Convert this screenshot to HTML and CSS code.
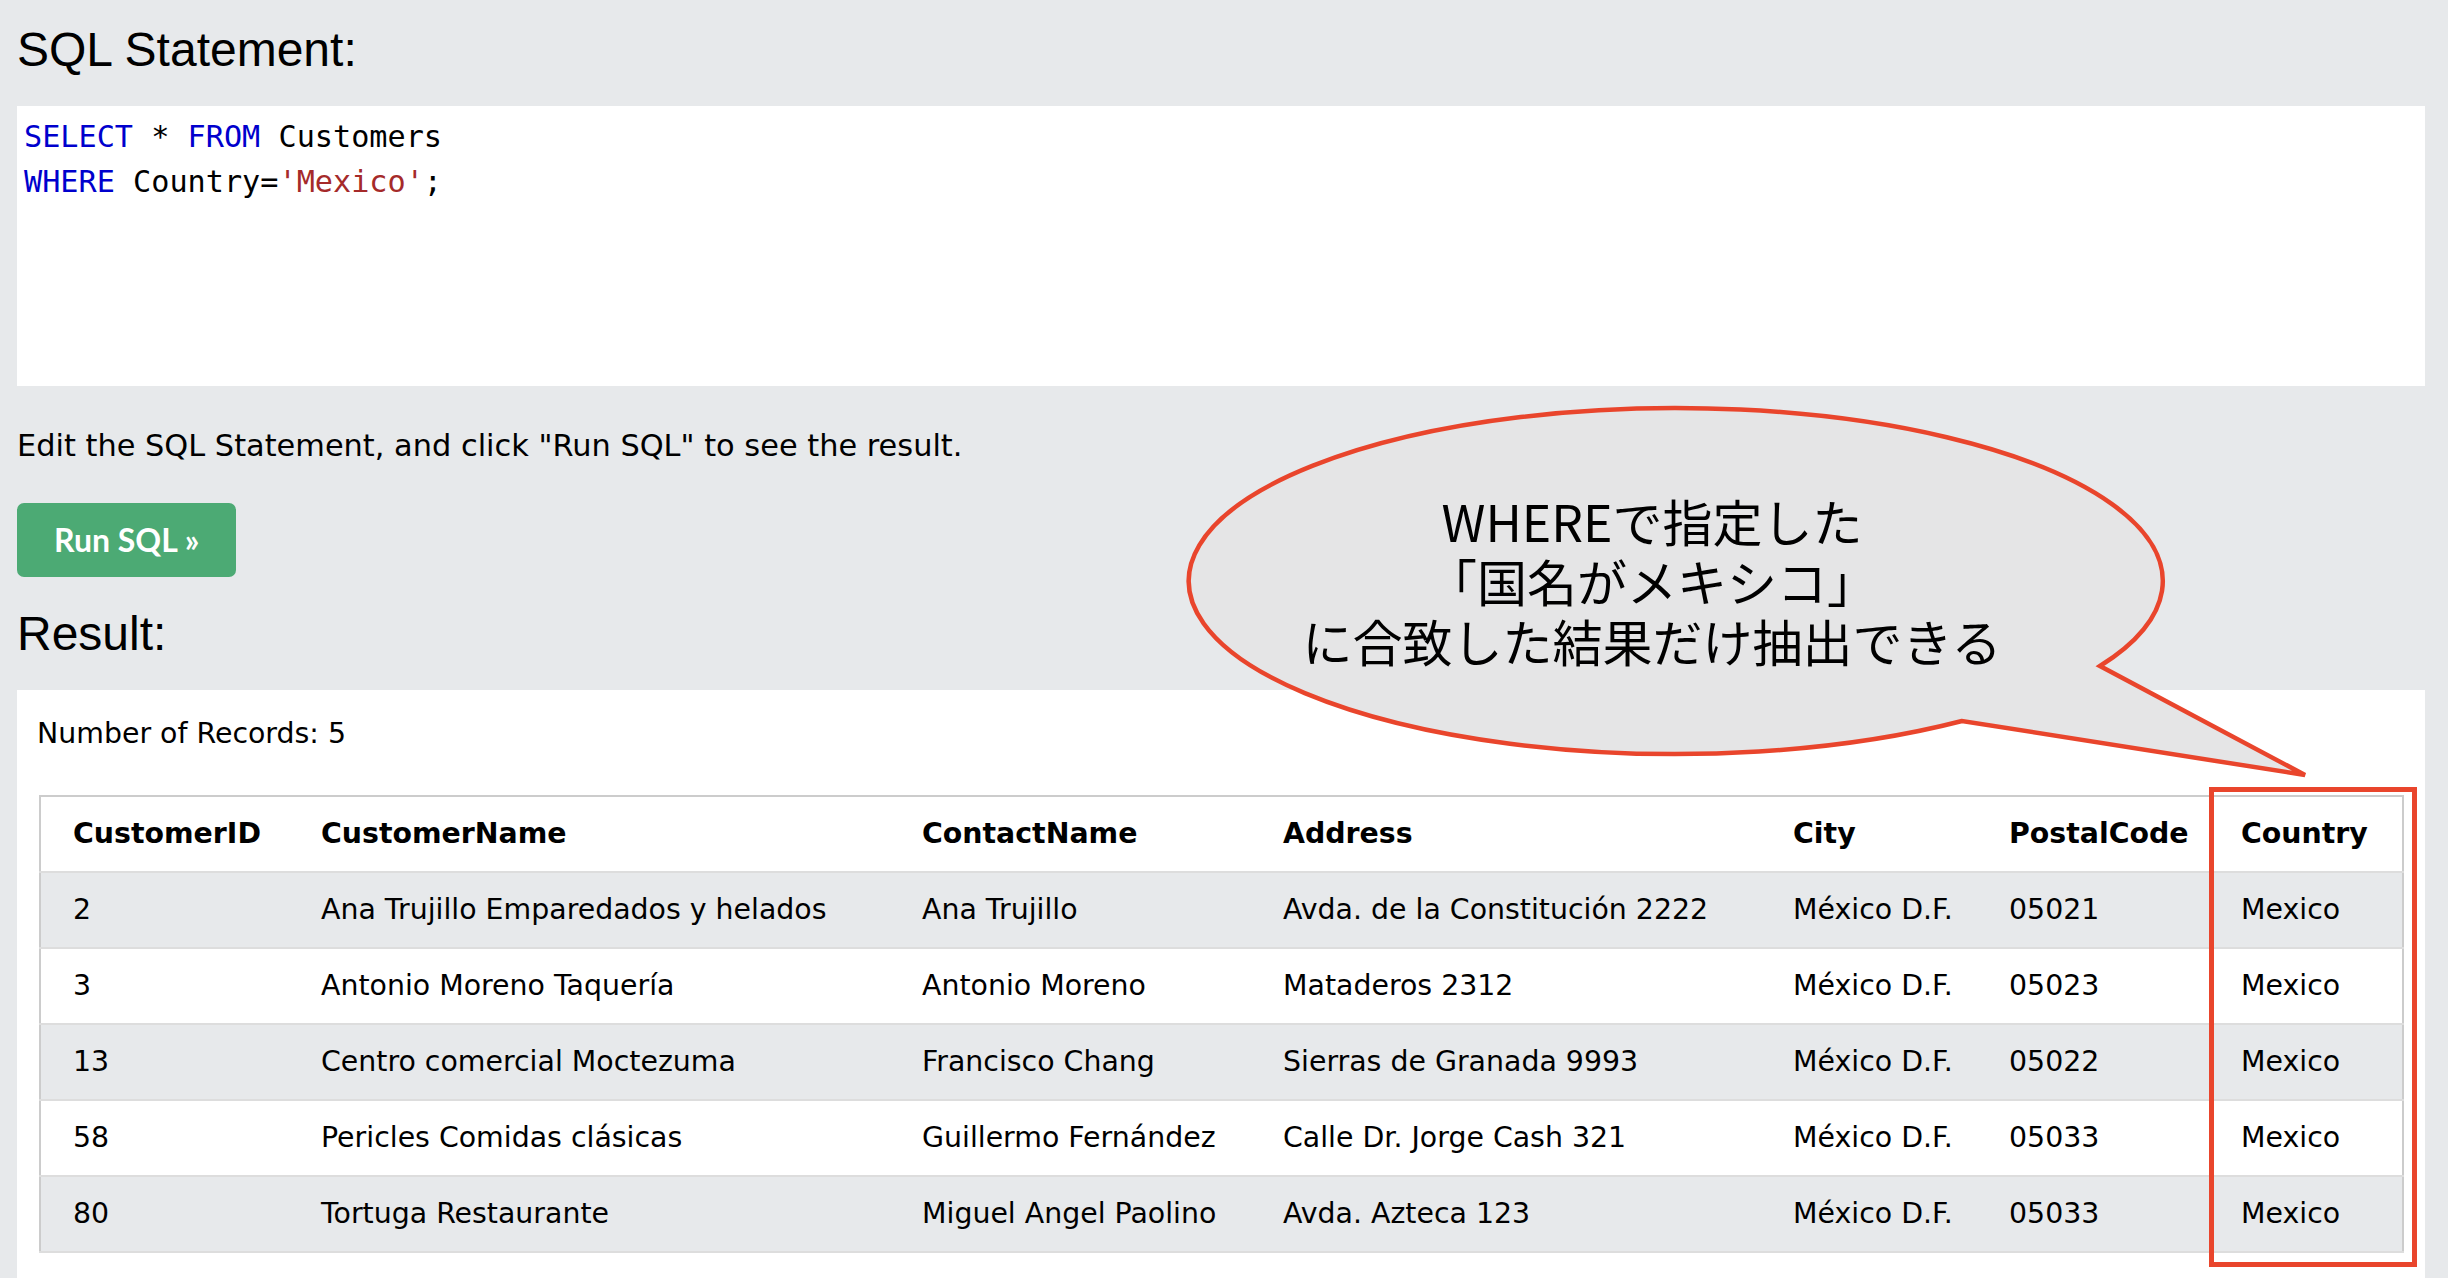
FILE: index.html
```html
<!DOCTYPE html>
<html lang="en">
<head>
<meta charset="utf-8">
<title>SQL Tryit</title>
<link rel="stylesheet" href="styles.css">
</head>
<body>
<div class="page">
  <h2 class="title">SQL Statement:</h2>
  <div class="code"><div class="code-line"><span class="kw">SELECT</span> * <span class="kw">FROM</span> Customers</div><div class="code-line"><span class="kw">WHERE</span> Country=<span class="str">'Mexico'</span>;</div></div>
  <p class="hint">Edit the SQL Statement, and click "Run SQL" to see the result.</p>
  <button class="run">Run SQL »</button>
  <h2 class="title result-title">Result:</h2>
  <div class="result">
    <div class="count">Number of Records: 5</div>
    <table class="grid">
      <colgroup>
        <col class="c1"><col class="c2"><col class="c3"><col class="c4"><col class="c5"><col class="c6"><col class="c7">
      </colgroup>
      <thead>
        <tr><th>CustomerID</th><th>CustomerName</th><th>ContactName</th><th>Address</th><th>City</th><th>PostalCode</th><th>Country</th></tr>
      </thead>
      <tbody>
        <tr><td>2</td><td>Ana Trujillo Emparedados y helados</td><td>Ana Trujillo</td><td>Avda. de la Constitución 2222</td><td>México D.F.</td><td>05021</td><td>Mexico</td></tr>
        <tr><td>3</td><td>Antonio Moreno Taquería</td><td>Antonio Moreno</td><td>Mataderos 2312</td><td>México D.F.</td><td>05023</td><td>Mexico</td></tr>
        <tr><td>13</td><td>Centro comercial Moctezuma</td><td>Francisco Chang</td><td>Sierras de Granada 9993</td><td>México D.F.</td><td>05022</td><td>Mexico</td></tr>
        <tr><td>58</td><td>Pericles Comidas clásicas</td><td>Guillermo Fernández</td><td>Calle Dr. Jorge Cash 321</td><td>México D.F.</td><td>05033</td><td>Mexico</td></tr>
        <tr><td>80</td><td>Tortuga Restaurante</td><td>Miguel Angel Paolino</td><td>Avda. Azteca 123</td><td>México D.F.</td><td>05033</td><td>Mexico</td></tr>
      </tbody>
    </table>
  </div>

  <svg class="bubble" viewBox="1170 395 1150 400" width="1150" height="400" aria-hidden="true">
    <path d="M 2100 666 A 487 173 0 1 0 1962 721 L 2305 775 Z" fill="#e5e5e6" stroke="#e9452c" stroke-width="4.5" stroke-linejoin="miter"/>
  </svg>
  <div class="bubble-text"><div class="bubble-line">WHEREで指定した</div><div class="bubble-line">「国名がメキシコ」</div><div class="bubble-line">に合致した結果だけ抽出できる</div></div>
  <div class="highlight"></div>
</div>
</body>
</html>
```

FILE: styles.css
```css
html, body {
  margin: 0;
  padding: 0;
  background: #e7e9eb;
}

.page {
  position: relative;
  padding: 22px 23px 0 17px;
  min-height: 1278px;
  box-sizing: border-box;
  overflow: hidden;
}

.title {
  margin: 0;
  font-family: "Liberation Sans", Arial, sans-serif;
  font-weight: normal;
  font-size: 48px;
  line-height: 56px;
  color: #000;
}

.code {
  margin-top: 28px;
  height: 280px;
  box-sizing: border-box;
  background: #fff;
  padding: 8px 7px;
  font-family: "DejaVu Sans Mono", monospace;
  font-size: 30.2px;
  line-height: 45px;
  color: #000;
  white-space: pre;
}

.kw { color: #0000cd; }
.str { color: #a52a2a; }

.hint {
  margin: 40px 0 0;
  font-family: "DejaVu Sans", Verdana, sans-serif;
  font-size: 30.4px;
  line-height: 40px;
  color: #000;
}

.run {
  display: inline-block;
  margin-top: 37px;
  height: 74px;
  padding: 0 37px;
  border: none;
  border-radius: 7px;
  background: #4caa74;
  color: #fff;
  font-family: Lato, "Open Sans", sans-serif;
  font-weight: bold;
  font-size: 32px;
  line-height: 74px;
  vertical-align: top;
}

.result-title {
  margin-top: 29px;
}

.result {
  margin-top: 28px;
  background: #fff;
  padding: 24px 21px 60px 22px;
  font-family: "DejaVu Sans", Verdana, sans-serif;
  font-size: 28.4px;
  line-height: 40px;
  color: #000;
}

.count {
  margin-left: -2px;
}

.grid {
  margin-top: 41px;
  width: 100%;
  border-collapse: collapse;
  table-layout: fixed;
  border: 2px solid #cccccc;
}

.c1 { width: 266px; }
.c2 { width: 601px; }
.c3 { width: 361px; }
.c4 { width: 510px; }
.c5 { width: 216px; }
.c6 { width: 232px; }

.grid tr {
  border-bottom: 2px solid #dddddd;
}

.grid th,
.grid td {
  padding: 17px 15px;
  text-align: left;
  white-space: nowrap;
  font-size: 28.4px;
  line-height: 40px;
}

.grid th {
  font-weight: bold;
}

.grid th:first-child,
.grid td:first-child {
  padding-left: 32px;
}

.grid thead tr {
  background: #fff;
}

.grid tbody tr:nth-child(odd) {
  background: #e7e9eb;
}

.grid tbody tr:nth-child(even) {
  background: #fff;
}

.bubble {
  position: absolute;
  left: 1170px;
  top: 395px;
}

.bubble-text {
  position: absolute;
  left: 1252px;
  top: 490px;
  width: 800px;
  text-align: center;
  font-family: "Noto Sans CJK JP", sans-serif;
  font-size: 50px;
  color: #000;
}

.bubble-line {
  height: 60px;
  line-height: 60px;
}

.highlight {
  position: absolute;
  left: 2209px;
  top: 787px;
  width: 208px;
  height: 480px;
  box-sizing: border-box;
  border: 5px solid #e9452c;
}
```
